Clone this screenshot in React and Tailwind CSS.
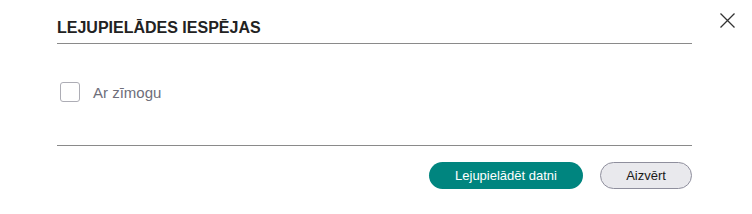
export default function App() {
  return (
    <div className="w-[752px] h-[214px] bg-white font-['Liberation_Sans',Arial,sans-serif] flex">
      {/* main column */}
      <div className="ml-[57px] w-[635px] flex flex-col">
        <div className="pt-[19px] pb-[6px] border-b border-[#8a8a8a]">
          <h2 className="text-[16px] leading-[18px] font-bold text-[#222]">LEJUPIELĀDES IESPĒJAS</h2>
        </div>

        <label className="mt-[38px] ml-[3px] flex items-center gap-[13px] h-[20px]">
          <span className="w-[20px] h-[20px] rounded-[3px] border-[1.5px] border-[#adadb5] bg-white" />
          <span className="text-[15px] leading-[20px] text-[#6e6e7a] mt-[1px]">Ar zīmogu</span>
        </label>

        <div className="mt-[43px] border-t border-[#8a8a8a] pt-[16px] flex justify-end gap-[17px]">
          <button className="w-[154px] h-[27px] rounded-full bg-[#00857f] text-white text-[13px] leading-[15px]">
            Lejupielādēt datni
          </button>
          <button className="w-[92px] h-[27px] rounded-full bg-[#e9e9ed] border border-[#8f8f9d] text-[#1a1a1a] text-[13px] leading-[15px]">
            Aizvērt
          </button>
        </div>
      </div>

      {/* close icon */}
      <button className="ml-[28px] mt-[13px] w-[15px] h-[15px] self-start" aria-label="close">
        <svg width="15" height="15" viewBox="0 0 15 15">
          <path d="M0.5 0.5 L14.5 14.5 M14.5 0.5 L0.5 14.5" stroke="#333" strokeWidth="1.3" fill="none" />
        </svg>
      </button>
    </div>
  );
}
